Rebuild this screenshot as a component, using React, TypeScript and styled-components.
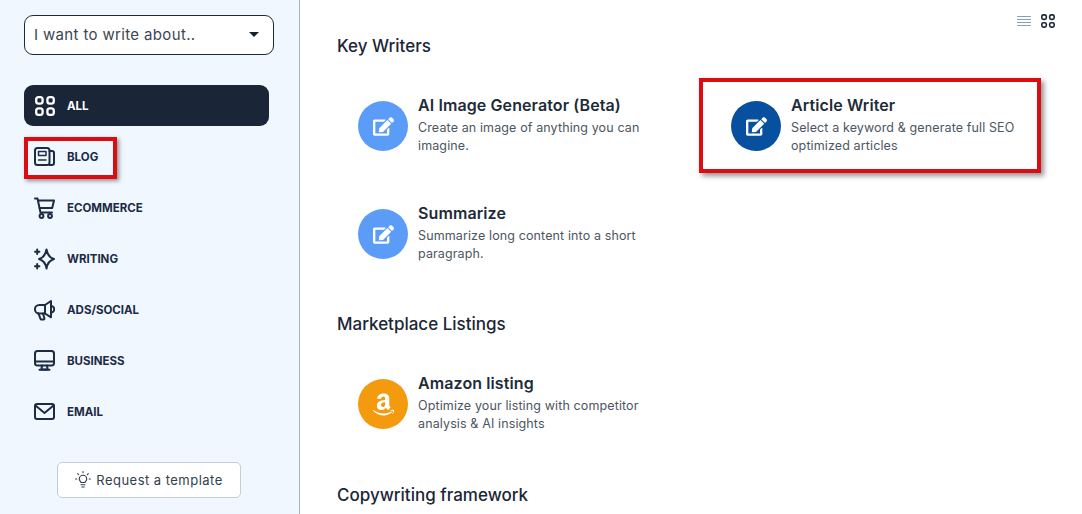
import styled, { createGlobalStyle } from "styled-components";
import { FaAmazon, FaEdit } from "react-icons/fa";
import type { ReactNode } from "react";

const GlobalStyle = createGlobalStyle`
  html, body {
    margin: 0;
    height: 100%;
    overflow: hidden;
    background: #fff;
  }
  body {
    font-family: Inter, "Noto Sans", sans-serif;
    color: #1b2a3d;
  }
`;

const Page = styled.div`
  display: flex;
  height: 514px;
  overflow: hidden;
`;

const Sidebar = styled.aside`
  box-sizing: border-box;
  flex: 0 0 300px;
  height: 514px;
  padding: 15px 25px 0 24px;
  background: #f1f7fe;
  border-right: 1px solid #a9b3bf;
  display: flex;
  flex-direction: column;
`;

const SelectBox = styled.div`
  box-sizing: border-box;
  width: 250px;
  height: 40px;
  padding: 0 14px 2px 9px;
  background: #fff;
  border: 1px solid #1b2a3d;
  border-radius: 9px;
  display: flex;
  align-items: center;
  justify-content: space-between;
  font-size: 15px;
  letter-spacing: 0.35px;
  color: #3a4654;
`;

const Caret = styled.span`
  width: 0;
  height: 0;
  border-left: 5.5px solid transparent;
  border-right: 5.5px solid transparent;
  border-top: 5px solid #16202c;
`;

const Nav = styled.nav`
  margin-top: 30px;
  display: flex;
  flex-direction: column;
  gap: 10px;
`;

const NavItem = styled.div<{ $active?: boolean; $flagged?: boolean }>`
  position: relative;
  box-sizing: border-box;
  width: 245px;
  height: 41px;
  padding-left: 10px;
  border-radius: 9px;
  display: flex;
  align-items: center;
  gap: 12px;
  font-size: 11.5px;
  font-weight: 700;
  color: ${(p) => (p.$active ? "#fff" : "#1b2c44")};
  background: ${(p) => (p.$active ? "#1a2638" : "transparent")};

  ${(p) =>
    p.$flagged &&
    `
    &::after {
      content: "";
      position: absolute;
      left: 0;
      top: 1px;
      width: 93px;
      height: 42px;
      box-sizing: border-box;
      border: 4px solid #dc0c12;
      box-shadow: 2px 2px 4px rgba(60, 60, 60, 0.55);
    }
  `}
`;

const NavIcon = styled.span`
  flex: 0 0 21px;
  height: 24px;
  display: flex;
  align-items: center;
  justify-content: center;
`;

const RequestButton = styled.button`
  box-sizing: border-box;
  align-self: flex-start;
  margin: 30px 0 0 33px;
  width: 184px;
  height: 36px;
  padding: 0 0 1px;
  background: #fff;
  border: 1px solid #c3cddc;
  border-radius: 5px;
  display: flex;
  align-items: center;
  justify-content: center;
  gap: 5px;
  font-family: inherit;
  font-size: 13px;
  letter-spacing: 0.47px;
  color: #333f4d;
`;

const Main = styled.main`
  flex: 1;
  min-width: 0;
  padding: 0 27px 0 37px;
`;

const ViewToolbar = styled.div`
  height: 34px;
  padding-top: 8px;
  box-sizing: border-box;
  display: flex;
  justify-content: flex-end;
  align-items: center;
  gap: 10px;
  color: #1a2638;
`;

const SectionTitle = styled.h2`
  margin: 0 0 21px;
  height: 24px;
  line-height: 24px;
  font-size: 17px;
  font-weight: 500;
  color: #1b2636;
`;

const CardGrid = styled.div<{ $after: number }>`
  display: grid;
  grid-template-columns: 363px 363px;
  grid-auto-rows: 94px;
  column-gap: 10px;
  row-gap: 14px;
  margin-bottom: ${(p) => p.$after}px;
`;

const Card = styled.div<{ $flagged?: boolean }>`
  position: relative;
  box-sizing: border-box;
  padding: 6px 0 0 21px;
  display: flex;
  align-items: center;
  gap: 10px;

  ${(p) =>
    p.$flagged &&
    `
    &::after {
      content: "";
      position: absolute;
      left: -11px;
      top: -1px;
      width: 342px;
      height: 95px;
      box-sizing: border-box;
      border: 4px solid #dc0c12;
      box-shadow: 3px 3px 5px rgba(60, 60, 60, 0.55);
    }
  `}
`;

const Badge = styled.div<{ $color: string }>`
  flex: 0 0 50px;
  height: 50px;
  margin-top: -6px;
  border-radius: 50%;
  background: ${(p) => p.$color};
  color: #fff;
  display: flex;
  align-items: center;
  justify-content: center;
  font-size: 21px;
`;

const CardText = styled.div`
  width: 240px;
  margin-top: -9px;
`;

const CardTitle = styled.div`
  margin-bottom: 3px;
  font-size: 16px;
  line-height: 22px;
  font-weight: 600;
  letter-spacing: 0.1px;
  color: #212b38;
`;

const CardDesc = styled.div`
  font-size: 12.5px;
  line-height: 18px;
  letter-spacing: 0.12px;
  color: #4c5662;
`;

// four rounded tiles, used in the nav and in the view switch
const GridIcon = ({ size }: { size: number }) => (
  <svg width={size} height={size} viewBox="0 0 20 20" fill="none" stroke="currentColor" strokeWidth="2.3">
    <rect x="1.2" y="1.2" width="6.4" height="6.4" rx="2.4" />
    <rect x="12.4" y="1.2" width="6.4" height="6.4" rx="2.4" />
    <rect x="1.2" y="12.4" width="6.4" height="6.4" rx="2.4" />
    <rect x="12.4" y="12.4" width="6.4" height="6.4" rx="2.4" />
  </svg>
);

const ListIcon = () => (
  <svg width="14" height="11" viewBox="0 0 14 11" fill="none" stroke="#86a0bd" strokeWidth="1">
    <path d="M0 .5h14M0 3.5h14M0 6.5h14M0 9.5h14" />
  </svg>
);

const Line = styled.svg.attrs({
  fill: "none",
  stroke: "currentColor",
  strokeWidth: 2,
  strokeLinecap: "round",
  strokeLinejoin: "round",
})``;

const NewsIcon = () => (
  <Line width="21" height="19" viewBox="0 0 21 19">
    <rect x="1" y="1" width="14.5" height="17" rx="2.5" />
    <path d="M15.5 4h2.5a2 2 0 0 1 2 2v10a2 2 0 0 1-2 2h-2.5" />
    <rect x="4.5" y="4.5" width="7.5" height="4" strokeWidth="1.5" />
    <path d="M4.5 13h7.5" strokeWidth="1.5" />
  </Line>
);

const CartIcon = () => (
  <Line width="21" height="22" viewBox="0 0 21 22">
    <path d="M1 1.5h2.5l3 14h11.5" />
    <path d="M4 3.5h16l-1.8 7.5H5.6" />
    <circle cx="7.5" cy="19" r="1.9" />
    <circle cx="16" cy="19" r="1.9" />
  </Line>
);

const SparkIcon = () => (
  <Line width="21" height="22" viewBox="0 0 21 22">
    <path d="M12.5 1.5Q13.8 9.2 20 11 13.8 12.8 12.5 20.5 11.2 12.8 5 11 11.2 9.2 12.5 1.5Z" />
    <path d="M3.2 1.5v4.4M1 3.7h4.4M3.2 16v4.4M1 18.2h4.4" />
  </Line>
);

const MegaphoneIcon = () => (
  <Line width="21" height="22" viewBox="0 0 21 22">
    <path d="M11 6H5.2a4.2 4.2 0 0 0 0 8.5H11l6 3.8V2z" />
    <path d="M11 6v8.5" />
    <path d="M17 7a3.2 3.2 0 0 1 0 6.5" />
    <path d="M4.5 14.5l2 5.4a1 1 0 0 0 1 .7h2a1 1 0 0 0 .9-1.3L9 14.5" />
  </Line>
);

const MonitorIcon = () => (
  <Line width="21" height="21" viewBox="0 0 21 21">
    <rect x="1" y="1" width="19" height="14.5" rx="2.5" />
    <path d="M1 11.5h19" />
    <path d="M8 15.5l-.6 4h6.2l-.6-4" />
    <path d="M5.5 19.7h10" />
  </Line>
);

const MailIcon = () => (
  <Line width="21" height="17" viewBox="0 0 21 17">
    <rect x="1" y="1" width="19" height="15" rx="2" />
    <path d="M1.5 2.5l9 7.5 9-7.5" />
  </Line>
);

const BulbIcon = () => (
  <svg width="16" height="17" viewBox="0 0 16 17" fill="none" stroke="currentColor" strokeWidth="1.1" strokeLinecap="round">
    <path d="M6 11.5c0-1-1.7-1.6-1.7-3.6a3.7 3.7 0 0 1 7.4 0c0 2-1.7 2.6-1.7 3.6z" />
    <path d="M6 13.7h4M6.8 16h2.4" />
    <path d="M8 .6v1.2M2.7 2.7l.9.9M13.3 2.7l-.9.9M.6 8h1.2M14.2 8h1.2" />
  </svg>
);

const WriterCard = ({
  title,
  desc,
  color,
  icon,
  flagged,
}: {
  title: string;
  desc: string;
  color: string;
  icon?: ReactNode;
  flagged?: boolean;
}) => (
  <Card $flagged={flagged}>
    <Badge $color={color}>{icon ?? <FaEdit />}</Badge>
    <CardText>
      <CardTitle>{title}</CardTitle>
      <CardDesc>{desc}</CardDesc>
    </CardText>
  </Card>
);

const navItems = [
  { label: "BLOG", icon: <NewsIcon />, flagged: true },
  { label: "ECOMMERCE", icon: <CartIcon /> },
  { label: "WRITING", icon: <SparkIcon /> },
  { label: "ADS/SOCIAL", icon: <MegaphoneIcon /> },
  { label: "BUSINESS", icon: <MonitorIcon /> },
  { label: "EMAIL", icon: <MailIcon /> },
];

export default function App() {
  return (
    <Page>
      <GlobalStyle />
      <Sidebar>
        <SelectBox>
          I want to write about..
          <Caret />
        </SelectBox>
        <Nav>
          <NavItem $active>
            <NavIcon>
              <GridIcon size={20} />
            </NavIcon>
            ALL
          </NavItem>
          {navItems.map((item) => (
            <NavItem key={item.label} $flagged={item.flagged}>
              <NavIcon>{item.icon}</NavIcon>
              {item.label}
            </NavItem>
          ))}
        </Nav>
        <RequestButton>
          <BulbIcon />
          Request a template
        </RequestButton>
      </Sidebar>
      <Main>
        <ViewToolbar>
          <ListIcon />
          <GridIcon size={14} />
        </ViewToolbar>
        <SectionTitle>Key Writers</SectionTitle>
        <CardGrid $after={31}>
          <WriterCard
            title="AI Image Generator (Beta)"
            desc="Create an image of anything you can imagine."
            color="#5b9cf9"
          />
          <WriterCard
            title="Article Writer"
            desc="Select a keyword & generate full SEO optimized articles"
            color="#06509f"
            flagged
          />
          <WriterCard
            title="Summarize"
            desc="Summarize long content into a short paragraph."
            color="#5b9cf9"
          />
        </CardGrid>
        <SectionTitle>Marketplace Listings</SectionTitle>
        <CardGrid $after={32}>
          <WriterCard
            title="Amazon listing"
            desc="Optimize your listing with competitor analysis & AI insights"
            color="#f49a0f"
            icon={<FaAmazon size={25} />}
          />
        </CardGrid>
        <SectionTitle>Copywriting framework</SectionTitle>
      </Main>
    </Page>
  );
}
